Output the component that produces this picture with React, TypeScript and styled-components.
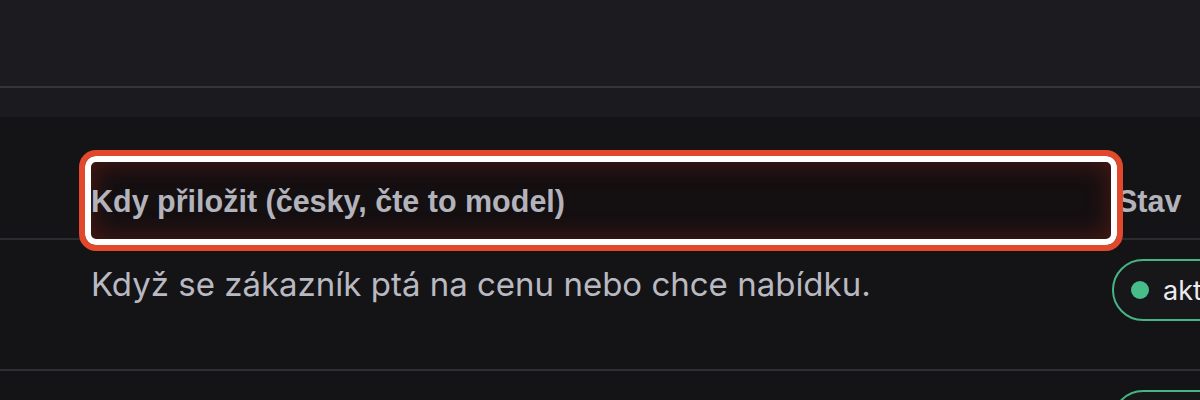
import React from "react";
import styled, { createGlobalStyle } from "styled-components";

const GlobalStyle = createGlobalStyle`
  html, body {
    margin: 0;
    padding: 0;
    background: #141316;
    overflow: hidden;
  }
  body {
    font-family: Inter, "Noto Sans", sans-serif;
  }
`;

const rows = [
  { when: "Když se zákazník ptá na cenu nebo chce nabídku.", status: "aktivní" },
  { when: "", status: "aktivní" },
];

function App() {
  return (
    <>
      <GlobalStyle />
      <Page>
        <TopBar />
        <SubBar />
        <Table>
          <HeadCell $first>
            <Highlight />
            <HeadLabel>Kdy přiložit (česky, čte to model)</HeadLabel>
          </HeadCell>
          <HeadCell>
            <HeadLabel $under>Stav</HeadLabel>
          </HeadCell>
          {rows.map((row, i) => (
            <React.Fragment key={i}>
              <Cell $first>
                <WhenText>{row.when}</WhenText>
              </Cell>
              <Cell>
                <Badge>
                  <Dot />
                  <BadgeText>{row.status}</BadgeText>
                </Badge>
              </Cell>
            </React.Fragment>
          ))}
        </Table>
      </Page>
    </>
  );
}

const Page = styled.div`
  width: 1200px;
  height: 400px;
  overflow: hidden;
  display: flex;
  flex-direction: column;
`;

const TopBar = styled.div`
  height: 86px;
  flex-shrink: 0;
  background: #1c1b20;
  border-bottom: 2px solid #35343a;
`;

const SubBar = styled.div`
  height: 29px;
  flex-shrink: 0;
  background: #1b1a1f;
`;

const Table = styled.div`
  display: grid;
  grid-template-columns: 1112px 1fr;
  background: #141316;
`;

const HeadCell = styled.div<{ $first?: boolean }>`
  position: relative;
  height: 123px;
  display: flex;
  align-items: flex-end;
  padding: 0 0 20px ${(p) => (p.$first ? "91px" : "5px")};
  box-sizing: border-box;
  border-bottom: 2px solid #2c2b30;
`;

// focus ring drawn over the first header cell
const Highlight = styled.div`
  position: absolute;
  left: 79px;
  right: -11px;
  top: 33px;
  height: 101px;
  box-sizing: border-box;
  border: 6px solid #e2482c;
  border-radius: 17px;
  background: #140f11;
  box-shadow: inset 0 0 0 6px #ffffff, inset 0 0 24px 8px rgba(180, 45, 28, 0.33);
  z-index: 1;
`;

const HeadLabel = styled.span<{ $under?: boolean }>`
  position: relative;
  z-index: ${(p) => (p.$under ? 0 : 2)};
  font-family: "Liberation Sans", Arial, sans-serif;
  font-weight: 700;
  font-size: 30.5px;
  line-height: 34px;
  color: #b3b3bb;
  white-space: nowrap;
`;

const Cell = styled.div<{ $first?: boolean }>`
  height: 131px;
  box-sizing: border-box;
  padding: 19px 0 0 ${(p) => (p.$first ? "91px" : "0")};
  border-bottom: 2px solid #2f2e33;
`;

const WhenText = styled.div`
  font-size: 33px;
  line-height: 40px;
  padding-top: 5px;
  color: #b9b9c1;
  white-space: nowrap;
`;

const Badge = styled.div`
  display: inline-flex;
  align-items: center;
  gap: 14px;
  height: 62px;
  box-sizing: border-box;
  padding: 0 24px 0 17px;
  border: 2px solid #47b486;
  border-radius: 31px;
  background: #17171a;
  white-space: nowrap;
`;

const Dot = styled.span`
  width: 18px;
  height: 18px;
  border-radius: 50%;
  background: #47bd8a;
  flex-shrink: 0;
`;

const BadgeText = styled.span`
  font-size: 27px;
  color: #ececf0;
`;

export default App;
